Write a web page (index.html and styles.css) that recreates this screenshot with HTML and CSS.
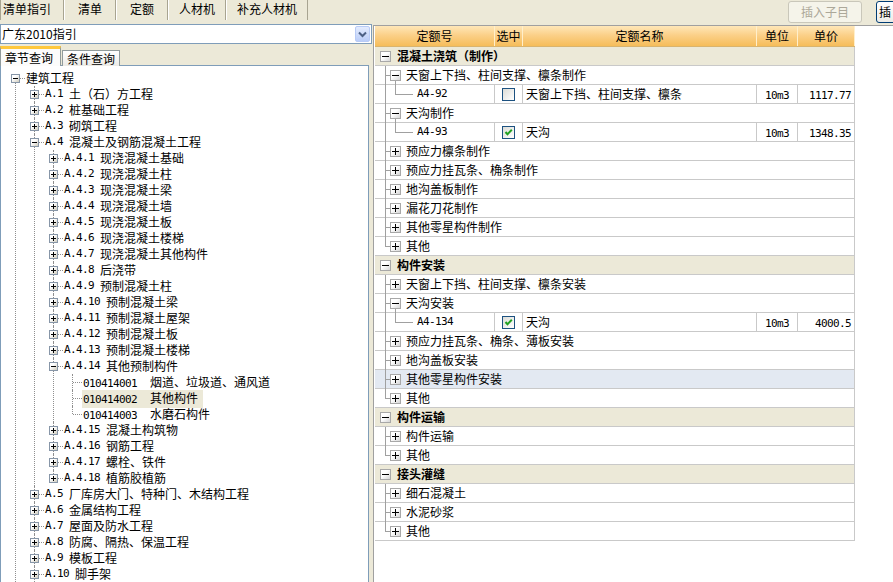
FILE: index.html
```html
<!DOCTYPE html>
<html lang="zh-CN">
<head>
<meta charset="utf-8">
<title>清单指引</title>
<link rel="stylesheet" href="styles.css">
</head>
<body>
<div class="app">
  <div class="left">
    <div class="tabs">
      <div class="tab t1">清单指引</div>
      <div class="tab t2">清单</div>
      <div class="tab t2">定额</div>
      <div class="tab t3">人材机</div>
      <div class="tab t3">补充人材机</div>
    </div>
    <div class="combo">
      <span class="combo-text">广东2010指引</span>
      <span class="combo-btn"><svg width="13" height="14" viewBox="0 0 13 14"><path d="M3 5.5 L6.5 9 L10 5.5" fill="none" stroke="#4D6185" stroke-width="2"/></svg></span>
    </div>
    <div class="subtabs">
      <div class="stab on">章节查询</div>
      <div class="stab">条件查询</div>
    </div>
    <div class="tree">
      <ul>
        <li class="first"><div class="node"><i class="xb m"></i>建筑工程</div>
          <ul>
            <li><div class="node"><i class="xb p"></i><span class="c">A.1</span>土（石）方工程</div></li>
            <li><div class="node"><i class="xb p"></i><span class="c">A.2</span>桩基础工程</div></li>
            <li><div class="node"><i class="xb p"></i><span class="c">A.3</span>砌筑工程</div></li>
            <li><div class="node"><i class="xb m"></i><span class="c">A.4</span>混凝土及钢筋混凝土工程</div>
              <ul>
                <li><div class="node"><i class="xb p"></i><span class="c">A.4.1</span>现浇混凝土基础</div></li>
                <li><div class="node"><i class="xb p"></i><span class="c">A.4.2</span>现浇混凝土柱</div></li>
                <li><div class="node"><i class="xb p"></i><span class="c">A.4.3</span>现浇混凝土梁</div></li>
                <li><div class="node"><i class="xb p"></i><span class="c">A.4.4</span>现浇混凝土墙</div></li>
                <li><div class="node"><i class="xb p"></i><span class="c">A.4.5</span>现浇混凝土板</div></li>
                <li><div class="node"><i class="xb p"></i><span class="c">A.4.6</span>现浇混凝土楼梯</div></li>
                <li><div class="node"><i class="xb p"></i><span class="c">A.4.7</span>现浇混凝土其他构件</div></li>
                <li><div class="node"><i class="xb p"></i><span class="c">A.4.8</span>后浇带</div></li>
                <li><div class="node"><i class="xb p"></i><span class="c">A.4.9</span>预制混凝土柱</div></li>
                <li><div class="node"><i class="xb p"></i><span class="c">A.4.10</span>预制混凝土梁</div></li>
                <li><div class="node"><i class="xb p"></i><span class="c">A.4.11</span>预制混凝土屋架</div></li>
                <li><div class="node"><i class="xb p"></i><span class="c">A.4.12</span>预制混凝土板</div></li>
                <li><div class="node"><i class="xb p"></i><span class="c">A.4.13</span>预制混凝土楼梯</div></li>
                <li><div class="node"><i class="xb m"></i><span class="c">A.4.14</span>其他预制构件</div>
                  <ul>
                    <li><div class="node"><i class="sp"></i><span class="lbl"><span class="c">010414001</span><span class="nm">烟道、垃圾道、通风道</span></span></div></li>
                    <li><div class="node"><i class="sp"></i><span class="lbl sel"><span class="c">010414002</span><span class="nm">其他构件</span></span></div></li>
                    <li class="last"><div class="node"><i class="sp"></i><span class="lbl"><span class="c">010414003</span><span class="nm">水磨石构件</span></span></div></li>
                  </ul>
                </li>
                <li><div class="node"><i class="xb p"></i><span class="c">A.4.15</span>混凝土构筑物</div></li>
                <li><div class="node"><i class="xb p"></i><span class="c">A.4.16</span>钢筋工程</div></li>
                <li><div class="node"><i class="xb p"></i><span class="c">A.4.17</span>螺栓、铁件</div></li>
                <li class="last"><div class="node"><i class="xb p"></i><span class="c">A.4.18</span>植筋胶植筋</div></li>
              </ul>
            </li>
            <li><div class="node"><i class="xb p"></i><span class="c">A.5</span>厂库房大门、特种门、木结构工程</div></li>
            <li><div class="node"><i class="xb p"></i><span class="c">A.6</span>金属结构工程</div></li>
            <li><div class="node"><i class="xb p"></i><span class="c">A.7</span>屋面及防水工程</div></li>
            <li><div class="node"><i class="xb p"></i><span class="c">A.8</span>防腐、隔热、保温工程</div></li>
            <li><div class="node"><i class="xb p"></i><span class="c">A.9</span>模板工程</div></li>
            <li><div class="node"><i class="xb p"></i><span class="c">A.10</span>脚手架</div></li>
          </ul>
        </li>
      </ul>
    </div>
  </div>

  <div class="right">
    <div class="toolbar">
      <button class="btn dis">插入子目</button>
      <button class="btn act">插</button>
    </div>
    <div class="panel">
      <div class="grid">
        <div class="ghead">
          <div class="h1">定额号</div>
          <div class="h2">选中</div>
          <div class="h3">定额名称</div>
          <div class="h4">单位</div>
          <div class="h5">单价</div>
        </div>

        <div class="row grp"><i class="gbox m"></i><span>混凝土浇筑（制作）</span></div>
        <div class="row sub open"><i class="gbox m"></i><span>天窗上下挡、柱间支撑、檩条制作</span></div>
        <div class="row data">
          <div class="cell c1"><i class="elbow"></i><span class="c">A4-92</span></div>
          <div class="cell c2"><span class="chk"></span></div>
          <div class="cell c3">天窗上下挡、柱间支撑、檩条</div>
          <div class="cell c4"><span class="c">10m3</span></div>
          <div class="cell c5"><span class="c">1117.77</span></div>
        </div>
        <div class="row sub open"><i class="gbox m"></i><span>天沟制作</span></div>
        <div class="row data">
          <div class="cell c1"><i class="elbow"></i><span class="c">A4-93</span></div>
          <div class="cell c2"><span class="chk"><svg width="11" height="11" viewBox="0 0 11 11"><path d="M2.5 5 L4.5 7.2 L8.8 2.8" fill="none" stroke="#21A121" stroke-width="2"/></svg></span></div>
          <div class="cell c3">天沟</div>
          <div class="cell c4"><span class="c">10m3</span></div>
          <div class="cell c5"><span class="c">1348.35</span></div>
        </div>
        <div class="row sub"><i class="gbox p"></i><span>预应力檩条制作</span></div>
        <div class="row sub"><i class="gbox p"></i><span>预应力挂瓦条、桷条制作</span></div>
        <div class="row sub"><i class="gbox p"></i><span>地沟盖板制作</span></div>
        <div class="row sub"><i class="gbox p"></i><span>漏花刀花制作</span></div>
        <div class="row sub"><i class="gbox p"></i><span>其他零星构件制作</span></div>
        <div class="row sub last"><i class="gbox p"></i><span>其他</span></div>

        <div class="row grp"><i class="gbox m"></i><span>构件安装</span></div>
        <div class="row sub"><i class="gbox p"></i><span>天窗上下挡、柱间支撑、檩条安装</span></div>
        <div class="row sub open"><i class="gbox m"></i><span>天沟安装</span></div>
        <div class="row data">
          <div class="cell c1"><i class="elbow"></i><span class="c">A4-134</span></div>
          <div class="cell c2"><span class="chk"><svg width="11" height="11" viewBox="0 0 11 11"><path d="M2.5 5 L4.5 7.2 L8.8 2.8" fill="none" stroke="#21A121" stroke-width="2"/></svg></span></div>
          <div class="cell c3">天沟</div>
          <div class="cell c4"><span class="c">10m3</span></div>
          <div class="cell c5"><span class="c">4000.5</span></div>
        </div>
        <div class="row sub"><i class="gbox p"></i><span>预应力挂瓦条、桷条、薄板安装</span></div>
        <div class="row sub"><i class="gbox p"></i><span>地沟盖板安装</span></div>
        <div class="row sub hl"><i class="gbox p"></i><span>其他零星构件安装</span></div>
        <div class="row sub last"><i class="gbox p"></i><span>其他</span></div>

        <div class="row grp"><i class="gbox m"></i><span>构件运输</span></div>
        <div class="row sub"><i class="gbox p"></i><span>构件运输</span></div>
        <div class="row sub last"><i class="gbox p"></i><span>其他</span></div>

        <div class="row grp"><i class="gbox m"></i><span>接头灌缝</span></div>
        <div class="row sub"><i class="gbox p"></i><span>细石混凝土</span></div>
        <div class="row sub"><i class="gbox p"></i><span>水泥砂浆</span></div>
        <div class="row sub last"><i class="gbox p"></i><span>其他</span></div>
      </div>
    </div>
  </div>
</div>
</body>
</html>
```

FILE: styles.css
```css
* { box-sizing: border-box; }
html, body { margin: 0; padding: 0; }
body {
  width: 893px;
  height: 582px;
  overflow: hidden;
  background: #ECE9D8;
  font-family: "Noto Sans CJK SC", "Noto Sans", sans-serif;
  font-size: 12px;
  line-height: 16px;
  color: #000;
}
.app { display: flex; height: 582px; overflow: hidden; }

/* ---------- left column ---------- */
.left { width: 373px; flex: none; display: flex; flex-direction: column; }
.tabs { display: flex; height: 20px; }
.tab {
  height: 20px;
  line-height: 18px;
  border-left: 1px solid #fff;
  border-right: 1px solid #A8A491;
  white-space: nowrap;
}
.t1 { padding: 0 12px 0 2px; border-left-color: #A8A491; }
.t2 { padding: 0 13px; }
.t3 { padding: 0 10px; }

.combo {
  margin-top: 4px;
  width: 372px;
  height: 20px;
  border: 1px solid #7F9DB9;
  background: #fff;
  display: flex;
  align-items: center;
  justify-content: space-between;
  padding: 0 1px 0 1px;
}
.combo-text { line-height: 18px; }
.combo-btn {
  width: 15px;
  height: 16px;
  border: 1px solid #B8CBF6;
  border-radius: 2px;
  background: linear-gradient(#E4ECFE, #BACDF8);
  display: flex;
  align-items: center;
  justify-content: center;
}

.subtabs {
  display: flex;
  align-items: flex-end;
  height: 20px;
  margin-top: 2px;
  margin-bottom: -1px;
  position: relative;
  z-index: 2;
}
.stab {
  height: 16px;
  line-height: 15px;
  padding: 0 4px;
  margin-left: 1px;
  border: 1px solid #919B9C;
  border-bottom: none;
  background: linear-gradient(#FFFFFF, #ECEBE6);
}
.stab.on {
  height: 20px;
  line-height: 17px;
  width: 61px;
  margin-left: 0;
  padding: 0 4px;
  border-top: 3px solid #FFC83C;
  border-left: 1px solid #919B9C;
  border-right: 1px solid #919B9C;
  background: #FCFCFB;
}

.tree {
  width: 369px;
  height: 530px;
  flex: none;
  border: 1px solid #7F9DB9;
  background: #fff;
  padding-top: 4px;
  overflow: hidden;
}
.tree ul { list-style: none; margin: 0; padding: 0 0 0 19px; }
.tree > ul { padding-left: 0; }
.tree li { position: relative; }
.tree li::before {
  content: "";
  position: absolute;
  left: 14px;
  top: 0;
  bottom: 0;
  border-left: 1px dotted #8F8F8F;
}
.tree li.first::before { top: 8px; }
.tree li.last::before { bottom: auto; height: 8px; }
.tree li::after {
  content: "";
  position: absolute;
  left: 15px;
  top: 8px;
  width: 9px;
  border-top: 1px dotted #8F8F8F;
}
.node {
  position: relative;
  z-index: 1;
  display: flex;
  align-items: flex-start;
  height: 16px;
  line-height: 16px;
  padding-left: 10px;
  white-space: nowrap;
}
.node > .c { margin-right: 6px; }
.xb {
  flex: none;
  width: 9px;
  height: 9px;
  margin: 4px 6px 0 0;
  border: 1px solid #8796A8;
  background:
    linear-gradient(#000, #000) center / 5px 1px no-repeat,
    linear-gradient(#000, #000) center / 1px 5px no-repeat,
    linear-gradient(135deg, #FFFFFF 35%, #CFCBBC);
}
.xb.m {
  background:
    linear-gradient(#000, #000) center / 5px 1px no-repeat,
    linear-gradient(135deg, #FFFFFF 35%, #CFCBBC);
}
.sp { flex: none; width: 9px; margin-right: 5px; }
.lbl { padding: 0 5px 0 1px; }
.lbl.sel { background: #ECE9D8; }
.nm { margin-left: 13px; }

.c {
  font-family: "DejaVu Sans Mono", "Liberation Mono", monospace;
  font-size: 11px;
  letter-spacing: -0.62px;
}

/* ---------- right column ---------- */
.right { flex: 1; min-width: 0; display: flex; flex-direction: column; }
.toolbar {
  height: 25px;
  flex: none;
  display: flex;
  justify-content: flex-end;
  align-items: flex-start;
  padding-top: 1px;
  gap: 14px;
}
.btn {
  height: 22px;
  width: 74px;
  flex: none;
  font-family: "Noto Sans CJK SC", sans-serif;
  font-size: 12px;
  line-height: 18px;
  padding: 0;
  border-radius: 3px;
}
.btn.dis {
  border: 1px solid #C9C7BA;
  background: #F5F4EA;
  color: #ACA899;
}
.btn.act {
  border: 1px solid #003C74;
  background: linear-gradient(#FFFFFF, #ECEBE6);
  color: #000;
  margin-right: -57px;
  text-align: left;
  padding-left: 2px;
}

.panel {
  flex: 1;
  background: #fff;
  border-top: 1px solid #A0A0A0;
  border-left: 1px solid #A0A0A0;
  padding-left: 1px;
}
.grid { width: 480px; }
.ghead {
  display: flex;
  height: 21px;
  border-bottom: 1px solid #D9B46E;
  background: linear-gradient(#FFE7B8, #FBD089 45%, #F6BD5A);
}
.ghead > div {
  line-height: 20px;
  text-align: center;
  border-right: 1px solid #FFEFCB;
}
.h1 { width: 120px; }
.h2 { width: 28px; }
.h3 { width: 234px; }
.h4 { width: 41px; }
.h5 { width: 57px; border-right: none; }

.row {
  position: relative;
  display: flex;
  align-items: flex-start;
  height: 19px;
  line-height: 18px;
  border-bottom: 1px solid #C9C9C9;
  border-right: 1px solid #C9C9C9;
  white-space: nowrap;
}
.grp { background: #ECE9D8; font-weight: bold; }
.hl { background: #E3E9F2; }

.gbox {
  position: relative;
  flex: none;
  width: 11px;
  height: 11px;
  margin-top: 4px;
  border: 1px solid #A8A8A8;
  background:
    linear-gradient(#000, #000) center / 7px 1px no-repeat,
    linear-gradient(#000, #000) center / 1px 7px no-repeat,
    linear-gradient(135deg, #FFFFFF 40%, #D6D6D6);
}
.gbox.m {
  background:
    linear-gradient(#000, #000) center / 7px 1px no-repeat,
    linear-gradient(135deg, #FFFFFF 40%, #D6D6D6);
}
.grp .gbox { margin-left: 5px; margin-right: 6px; }
.sub .gbox { margin-left: 15px; margin-right: 5px; }

.sub::before, .data::before {
  content: "";
  position: absolute;
  left: 10px;
  top: 0;
  width: 1px;
  height: 19px;
  background: #A0A0A0;
}
.sub.last::before { height: 10px; }
.sub::after {
  content: "";
  position: absolute;
  left: 10px;
  top: 9px;
  width: 5px;
  height: 1px;
  background: #A0A0A0;
}
.sub.open .gbox::after {
  content: "";
  position: absolute;
  left: 4px;
  top: 10px;
  width: 1px;
  height: 5px;
  background: #A0A0A0;
}

.cell { height: 18px; border-right: 1px solid #C9C9C9; }
.c1 { width: 120px; display: flex; align-items: flex-start; }
.c2 { width: 28px; display: flex; justify-content: center; }
.c3 { width: 234px; padding-left: 3px; }
.c4 { width: 41px; text-align: center; }
.c5 { width: 56px; border-right: none; text-align: right; padding-right: 3px; }
.elbow {
  flex: none;
  width: 18px;
  height: 10px;
  margin-left: 20px;
  margin-right: 4px;
  border-left: 1px solid #A0A0A0;
  border-bottom: 1px solid #A0A0A0;
}
.chk {
  width: 13px;
  height: 13px;
  margin-top: 3px;
  border: 1px solid #1C5180;
  background: linear-gradient(135deg, #DCDCD7, #FFFFFF);
  display: flex;
  align-items: center;
  justify-content: center;
}
```
